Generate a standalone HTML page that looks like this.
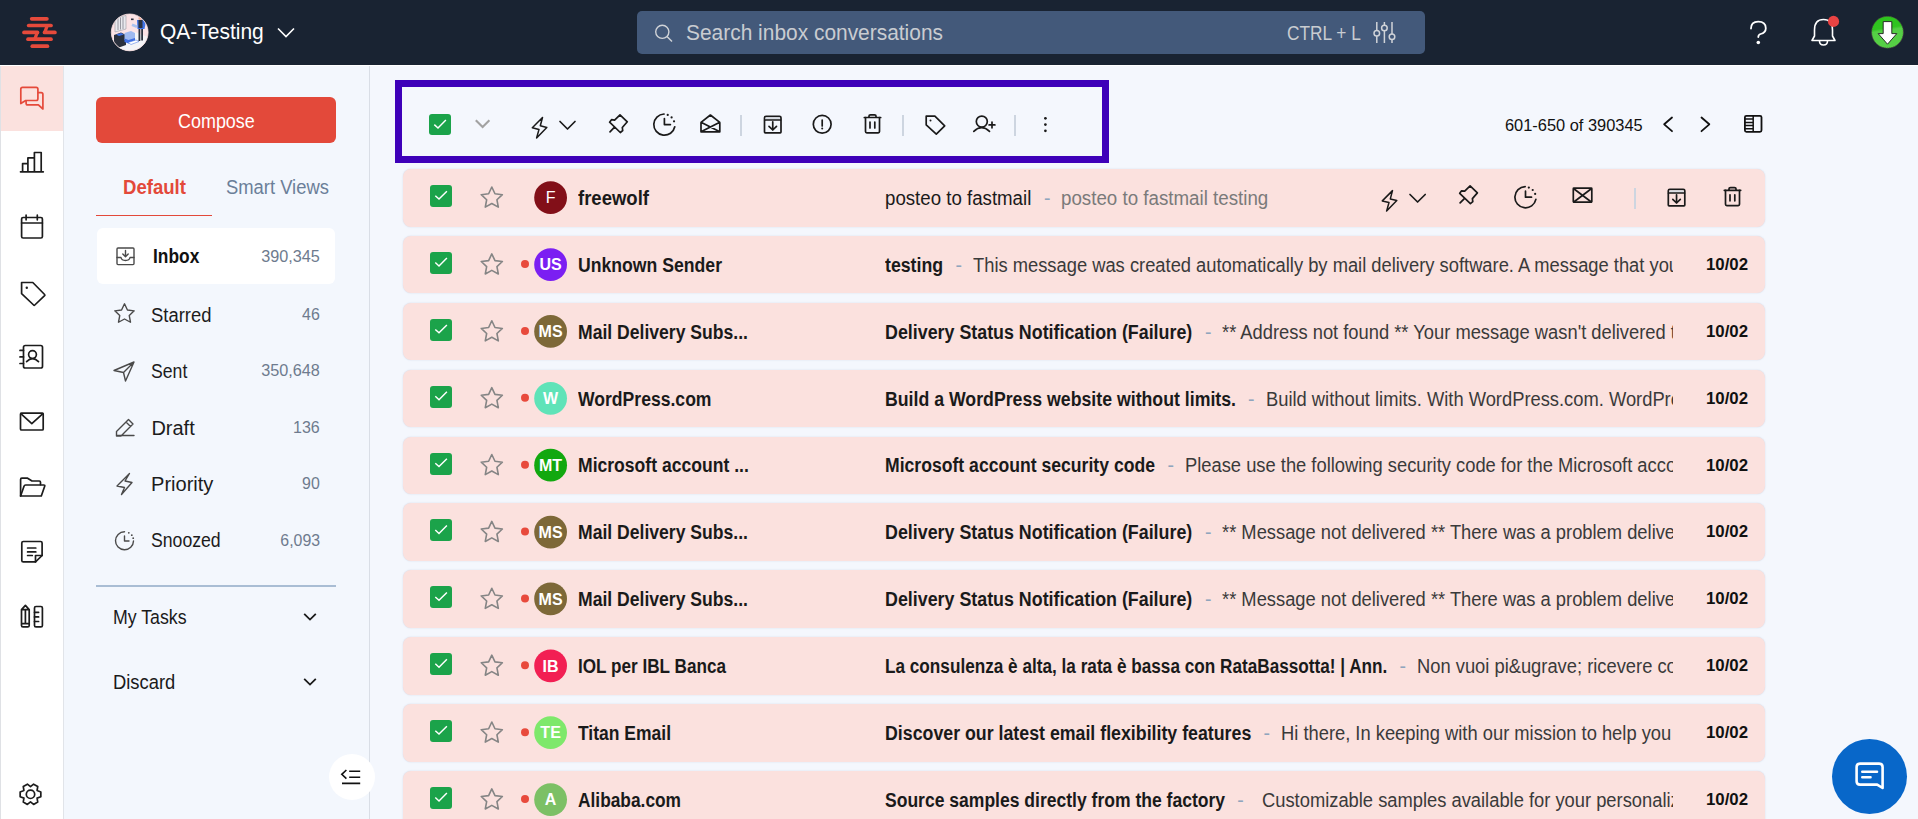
<!DOCTYPE html><html><head><meta charset="utf-8"><style>html,body{margin:0;padding:0;width:1918px;height:819px;overflow:hidden;background:#f4f7fd;font-family:"Liberation Sans", sans-serif}div{font-family:"Liberation Sans", sans-serif}</style></head><body><div style="position:absolute;left:0;top:0;width:1918px;height:65px;background:#192332;border-bottom:1px solid #fff;box-sizing:content-box"></div><div style="position:absolute;left:637px;top:11px;width:788px;height:43px;background:#43597a;border-radius:5px"></div><div style="position:absolute;left:0;top:66px;width:64px;height:753px;background:#ffffff;border-left:1px solid #dfe1e5;border-right:1px solid #e1e4e9;box-sizing:border-box"></div><div style="position:absolute;left:1px;top:66px;width:62px;height:65px;background:#fbe1de"></div><div style="position:absolute;left:64px;top:66px;width:306px;height:753px;background:#f3f7fd;border-right:1px solid #d9dee6;box-sizing:border-box"></div><div style="position:absolute;left:96px;top:97px;width:240px;height:46px;background:#e3493a;border-radius:6px"></div><div style="position:absolute;left:96px;top:214.5px;width:116px;height:1.5px;background:#e3493a"></div><div style="position:absolute;left:97px;top:228px;width:238px;height:56px;background:#ffffff;border-radius:6px"></div><div style="position:absolute;left:96px;top:584.5px;width:240px;height:2px;background:#a9bdd4"></div><div style="position:absolute;left:329px;top:754px;width:46px;height:46px;background:#ffffff;border-radius:50%"></div><div style="position:absolute;left:395px;top:79.5px;width:714px;height:83.5px;border:7.5px solid #3e00b9;box-sizing:border-box"></div><div style="position:absolute;left:429px;top:114px;width:22px;height:21px;background:#1ba34a;border-radius:3px"></div><div style="position:absolute;left:740.3px;top:115px;width:2px;height:20.5px;background:#cdd5e0"></div><div style="position:absolute;left:901.9px;top:115px;width:2px;height:20.5px;background:#cdd5e0"></div><div style="position:absolute;left:1013.9px;top:115px;width:2px;height:20.5px;background:#cdd5e0"></div><div style="position:absolute;left:403px;top:169.000px;width:1362px;height:57.5px;background:#fbe1de;border-radius:8px;box-shadow:0 0 1.5px rgba(150,170,200,0.45)"></div><div style="position:absolute;left:430px;top:185.1px;width:22px;height:22px;background:#1ba34a;border-radius:3px"></div><div style="position:absolute;left:403px;top:235.875px;width:1362px;height:57.5px;background:#fbe1de;border-radius:8px;box-shadow:0 0 1.5px rgba(150,170,200,0.45)"></div><div style="position:absolute;left:430px;top:251.98px;width:22px;height:22px;background:#1ba34a;border-radius:3px"></div><div style="position:absolute;left:403px;top:302.750px;width:1362px;height:57.5px;background:#fbe1de;border-radius:8px;box-shadow:0 0 1.5px rgba(150,170,200,0.45)"></div><div style="position:absolute;left:430px;top:318.85px;width:22px;height:22px;background:#1ba34a;border-radius:3px"></div><div style="position:absolute;left:403px;top:369.625px;width:1362px;height:57.5px;background:#fbe1de;border-radius:8px;box-shadow:0 0 1.5px rgba(150,170,200,0.45)"></div><div style="position:absolute;left:430px;top:385.73px;width:22px;height:22px;background:#1ba34a;border-radius:3px"></div><div style="position:absolute;left:403px;top:436.500px;width:1362px;height:57.5px;background:#fbe1de;border-radius:8px;box-shadow:0 0 1.5px rgba(150,170,200,0.45)"></div><div style="position:absolute;left:430px;top:452.6px;width:22px;height:22px;background:#1ba34a;border-radius:3px"></div><div style="position:absolute;left:403px;top:503.375px;width:1362px;height:57.5px;background:#fbe1de;border-radius:8px;box-shadow:0 0 1.5px rgba(150,170,200,0.45)"></div><div style="position:absolute;left:430px;top:519.48px;width:22px;height:22px;background:#1ba34a;border-radius:3px"></div><div style="position:absolute;left:403px;top:570.250px;width:1362px;height:57.5px;background:#fbe1de;border-radius:8px;box-shadow:0 0 1.5px rgba(150,170,200,0.45)"></div><div style="position:absolute;left:430px;top:586.35px;width:22px;height:22px;background:#1ba34a;border-radius:3px"></div><div style="position:absolute;left:403px;top:637.125px;width:1362px;height:57.5px;background:#fbe1de;border-radius:8px;box-shadow:0 0 1.5px rgba(150,170,200,0.45)"></div><div style="position:absolute;left:430px;top:653.23px;width:22px;height:22px;background:#1ba34a;border-radius:3px"></div><div style="position:absolute;left:403px;top:704.000px;width:1362px;height:57.5px;background:#fbe1de;border-radius:8px;box-shadow:0 0 1.5px rgba(150,170,200,0.45)"></div><div style="position:absolute;left:430px;top:720.1px;width:22px;height:22px;background:#1ba34a;border-radius:3px"></div><div style="position:absolute;left:403px;top:770.875px;width:1362px;height:57.5px;background:#fbe1de;border-radius:8px;box-shadow:0 0 1.5px rgba(150,170,200,0.45)"></div><div style="position:absolute;left:430px;top:786.98px;width:22px;height:22px;background:#1ba34a;border-radius:3px"></div><div style="position:absolute;left:1634px;top:188px;width:2px;height:20.5px;background:#cdd5e0"></div><div style="position:absolute;left:1832px;top:739px;width:75px;height:75px;background:#0867c9;border-radius:50%"></div><svg style="position:absolute;left:0;top:0" width="1918" height="819" viewBox="0 0 1918 819"><line x1="31.7" y1="18.8" x2="46.9" y2="18.8" stroke="#e64a3b" stroke-width="3.7" stroke-linecap="round"/><line x1="28.7" y1="25.5" x2="51" y2="25.5" stroke="#e64a3b" stroke-width="3.7" stroke-linecap="round"/><line x1="24" y1="32.4" x2="37.5" y2="32.4" stroke="#e64a3b" stroke-width="3.7" stroke-linecap="round"/><line x1="44.5" y1="32.4" x2="54.9" y2="32.4" stroke="#e64a3b" stroke-width="3.7" stroke-linecap="round"/><line x1="28" y1="39.2" x2="51" y2="39.2" stroke="#e64a3b" stroke-width="3.7" stroke-linecap="round"/><line x1="32.3" y1="46.2" x2="47.4" y2="46.2" stroke="#e64a3b" stroke-width="3.7" stroke-linecap="round"/><polygon points="45.5,25.5 49,25.5 46.5,32.4 43,32.4" fill="#e64a3b"/><polygon points="35.5,32.4 39,32.4 36.5,39.2 33,39.2" fill="#e64a3b"/><defs><clipPath id="avc"><circle cx="129.7" cy="32.4" r="18.4"/></clipPath></defs><g clip-path="url(#avc)"><rect x="110" y="13" width="40" height="40" fill="#fbe3e6"/><polygon points="110,40 135,32 150,38 150,53 110,53" fill="#f4f4f7"/><polygon points="115,18 126,15.5 126,29 115,32" fill="#e9e9ee" stroke="#9a9aa2" stroke-width="0.6"/><path d="M118 18 V30 M120.5 17.5 V29.5 M123 17 V29" stroke="#8d8d96" stroke-width="0.9"/><polygon points="114,35 121,32.5 126,35 126,45 119,47.5 114,45" fill="#2a303d"/><polygon points="116,34.5 121,33 124,34.5 119,36" fill="#3d6ee0"/><polygon points="124.5,33 131,31 135,33 135,40 128.5,42 124.5,40" fill="#9fb9f0"/><polygon points="124.5,38.5 128.5,40 135,38 135,41.5 128.5,43.5 124.5,42" fill="#3f6fe3"/><polygon points="128,42.5 136,40 139,41.5 131,44.5" fill="#ffffff" stroke="#3f6fe3" stroke-width="0.5"/><rect x="138.5" y="28" width="1.8" height="13" fill="#2c3340"/><rect x="141.2" y="28" width="1.8" height="12.5" fill="#2c3340"/><polygon points="137,20 144,19.5 145.5,24 144.5,29 137.5,29" fill="#3f73e6"/><rect x="138.5" y="20" width="4" height="8" fill="#2c3340"/><circle cx="140.3" cy="18.2" r="1.8" fill="#f0b09a"/><polygon points="132.5,23.5 137.5,25.5 136.5,28 131.5,26" fill="#a9c2f2"/><rect x="131" y="18.5" width="2.6" height="1.6" fill="#2c3340"/></g><circle cx="129.7" cy="32.4" r="18.4" fill="none" stroke="#f6dede" stroke-width="0.8"/><polyline points="278,28.5 286,36.5 294,28.5" fill="none" stroke="#fff" stroke-width="1.6"/><circle cx="662.3" cy="31.8" r="6.6" fill="none" stroke="#d0d3d8" stroke-width="1.4"/><line x1="667" y1="36.6" x2="672" y2="41.5" stroke="#d0d3d8" stroke-width="1.4"/><line x1="1376.8" y1="22" x2="1376.8" y2="43" stroke="#d0d3d8" stroke-width="1.5"/><circle cx="1376.8" cy="33.3" r="2.8" fill="#43597a" stroke="#d0d3d8" stroke-width="1.5"/><line x1="1384.4" y1="22" x2="1384.4" y2="43" stroke="#d0d3d8" stroke-width="1.5"/><circle cx="1384.4" cy="28.0" r="2.8" fill="#43597a" stroke="#d0d3d8" stroke-width="1.5"/><line x1="1392" y1="22" x2="1392" y2="43" stroke="#d0d3d8" stroke-width="1.5"/><circle cx="1392" cy="36.8" r="2.8" fill="#43597a" stroke="#d0d3d8" stroke-width="1.5"/><path d="M1751 28.6 Q1751 21.6 1758.2 21.6 Q1765.8 21.6 1765.8 28.2 Q1765.8 32.6 1760.6 34 Q1758.3 34.8 1758.3 37" fill="none" stroke="#fff" stroke-width="1.8" stroke-linecap="round"/><circle cx="1758.3" cy="42.5" r="1.8" fill="#fff"/><path d="M1812 40.5 L1814.5 36 V30 Q1814.5 19.5 1823.5 19.5 Q1832.5 19.5 1832.5 30 V36 L1835 40.5 Z" fill="none" stroke="#fff" stroke-width="1.6" stroke-linejoin="round"/><path d="M1819.5 41 Q1819.5 45 1823.5 45 Q1827.5 45 1827.5 41" fill="none" stroke="#fff" stroke-width="1.6"/><circle cx="1833.5" cy="21.4" r="5.6" fill="#e94343"/><defs><linearGradient id="gg" x1="0" y1="0" x2="0.15" y2="1"><stop offset="0" stop-color="#2cc51c"/><stop offset="0.42" stop-color="#30c420"/><stop offset="0.5" stop-color="#55cf45"/><stop offset="1" stop-color="#55cf45"/></linearGradient></defs><circle cx="1887.5" cy="32.25" r="15.9" fill="url(#gg)" stroke="#4a4040" stroke-width="0.9" stroke-dasharray="1.3 0.7"/><path d="M1883.2 21.6 H1891.8 V33.6 H1896.8 L1887.5 44.2 L1878.2 33.6 H1883.2 Z" fill="#fff" stroke="#1a1a1a" stroke-width="0.9"/><path d="M20.8 103.5 V89 Q20.8 87.3 22.5 87.3 H36.2 Q37.9 87.3 37.9 89 V98.8 Q37.9 100.5 36.2 100.5 H25.7 Z" fill="none" stroke="#e54a3b" stroke-width="1.7" stroke-linejoin="round"/><path d="M37.9 92.7 H41.2 Q42.9 92.7 42.9 94.4 V109 L38.4 104.9 H27.8 Q26.1 104.9 26.1 103.2 V100.5" fill="none" stroke="#e54a3b" stroke-width="1.7" stroke-linejoin="round"/><path d="M20.5 171.8 H43.3 M22.6 171.8 V163.6 H27.9 V171.8 M27.9 163.6 V157.9 H34.4 V171.8 M34.4 157.9 V152.5 H41.2 V171.8" fill="none" stroke="#1c1c1c" stroke-width="1.7" stroke-linejoin="round" stroke-linecap="round"/><rect x="21.6" y="217.5" width="20.8" height="20.5" rx="1.5" fill="none" stroke="#1c1c1c" stroke-width="1.7" stroke-linejoin="round" stroke-linecap="round"/><path d="M21.6 223 H42.4 M26.1 215.2 V219.8 M37.3 215.2 V219.8" fill="none" stroke="#1c1c1c" stroke-width="1.7" stroke-linejoin="round" stroke-linecap="round"/><path d="M21.6 282.5 H32.8 L44.6 294.5 Q45.2 295.1 44.6 295.7 L34.8 305 Q34.2 305.6 33.6 305 L21.6 293.7 Z" fill="none" stroke="#1c1c1c" stroke-width="1.7" stroke-linejoin="round" stroke-linecap="round"/><circle cx="26.8" cy="287.7" r="1.2" fill="#1c1c1c"/><rect x="23.5" y="345.5" width="19" height="22.5" rx="1.8" fill="none" stroke="#1c1c1c" stroke-width="1.7" stroke-linejoin="round" stroke-linecap="round"/><path d="M20 350.4 H23.5 M20 356.9 H23.5 M20 363.5 H23.5" fill="none" stroke="#1c1c1c" stroke-width="1.7" stroke-linejoin="round" stroke-linecap="round"/><circle cx="32.5" cy="354.6" r="3.9" fill="none" stroke="#1c1c1c" stroke-width="1.7" stroke-linejoin="round" stroke-linecap="round"/><path d="M26.6 361.6 Q32.5 355.8 38.5 361.6" fill="none" stroke="#1c1c1c" stroke-width="1.7" stroke-linejoin="round" stroke-linecap="round"/><rect x="20.5" y="413.2" width="22.7" height="16.8" rx="1" fill="none" stroke="#1c1c1c" stroke-width="1.7" stroke-linejoin="round" stroke-linecap="round"/><path d="M20.8 413.6 L31.8 423.6 L42.9 413.6" fill="none" stroke="#1c1c1c" stroke-width="1.7" stroke-linejoin="round" stroke-linecap="round"/><path d="M20.6 496 V479.4 Q20.6 478.2 21.8 478.2 H27.6 L32 481 H39.3 Q40.5 481 40.5 482.2 V484.6" fill="none" stroke="#1c1c1c" stroke-width="1.7" stroke-linejoin="round" stroke-linecap="round"/><path d="M20.6 496 L24 486.2 Q24.4 485 25.6 485 H43.8 Q45.1 485 44.7 486.2 L41.3 496 Z" fill="none" stroke="#1c1c1c" stroke-width="1.7" stroke-linejoin="round" stroke-linecap="round"/><path d="M21.8 543 Q21.8 541.5 23.3 541.5 H40.6 Q42.1 541.5 42.1 543 V555.5 L35.5 561.9 H23.3 Q21.8 561.9 21.8 560.4 Z" fill="none" stroke="#1c1c1c" stroke-width="1.7" stroke-linejoin="round" stroke-linecap="round"/><path d="M35.5 561.9 V555.5 H42.1 M27.6 548 H35.8 M27.6 551.9 H35.8 M27.6 555.5 H32.3" fill="none" stroke="#1c1c1c" stroke-width="1.7" stroke-linejoin="round" stroke-linecap="round"/><path d="M21.5 609.6 L25.4 605.4 L29.2 609.6 V625.4 Q29.2 626.9 27.7 626.9 H23 Q21.5 626.9 21.5 625.4 Z M21.5 609.6 H29.2 M25.4 609.6 V623.6 M21.5 623.6 H29.2" fill="none" stroke="#1c1c1c" stroke-width="1.7" stroke-linejoin="round" stroke-linecap="round"/><rect x="34.5" y="606.5" width="7.9" height="20.4" rx="1.5" fill="none" stroke="#1c1c1c" stroke-width="1.7" stroke-linejoin="round" stroke-linecap="round"/><path d="M34.5 612.3 H38.6 M34.5 616.9 H38.6 M34.5 621.5 H38.6" fill="none" stroke="#1c1c1c" stroke-width="1.7" stroke-linejoin="round" stroke-linecap="round"/><path d="M37.08 790.50 L40.83 791.92 L40.83 796.68 L37.08 798.10 L37.73 802.05 L33.60 804.44 L30.50 801.90 L27.40 804.44 L23.27 802.05 L23.92 798.10 L20.17 796.68 L20.17 791.92 L23.92 790.50 L23.27 786.55 L27.40 784.16 L30.50 786.70 L33.60 784.16 L37.73 786.55 Z" fill="none" stroke="#1c1c1c" stroke-width="1.7" stroke-linejoin="round" stroke-linecap="round"/><circle cx="30.5" cy="794.3" r="4.2" fill="none" stroke="#1c1c1c" stroke-width="1.7" stroke-linejoin="round" stroke-linecap="round"/><rect x="117" y="248" width="17" height="16.6" rx="1" fill="none" stroke="#4a4a4a" stroke-width="1.4" stroke-linejoin="round" stroke-linecap="round"/><path d="M117 257.5 H121 Q121.5 260.5 125.5 260.5 Q129.5 260.5 130 257.5 H134 M125.5 250.5 V256.5 M122.8 254 L125.5 256.7 L128.2 254" fill="none" stroke="#4a4a4a" stroke-width="1.4" stroke-linejoin="round" stroke-linecap="round"/><polygon points="124.50,303.80 127.44,309.95 134.20,310.85 129.26,315.55 130.50,322.25 124.50,319.00 118.50,322.25 119.74,315.55 114.80,310.85 121.56,309.95" fill="none" stroke="#4a4a4a" stroke-width="1.4" stroke-linejoin="round" stroke-linecap="round"/><path d="M114 370.5 L134 362 L125.5 381 L123.5 372.5 Z M123.5 372.5 L134 362" fill="none" stroke="#4a4a4a" stroke-width="1.4" stroke-linejoin="round" stroke-linecap="round"/><path d="M116.5 435.5 V431.5 L128.5 419.5 L133 424 L121 436 H116.5 Z M116.5 435.5 H134 M126 422 L130.5 426.5" fill="none" stroke="#4a4a4a" stroke-width="1.4" stroke-linejoin="round" stroke-linecap="round"/><path d="M129.5 473.5 L117 486 L124.5 487.5 L121.5 494.5 L132 482.5 L125 481 Z" fill="none" stroke="#4a4a4a" stroke-width="1.4" stroke-linejoin="round" stroke-linecap="round"/><path d="M124.5 531.8 A9 9 0 1 0 133.5 541" fill="none" stroke="#4a4a4a" stroke-width="1.4" stroke-linejoin="round" stroke-linecap="round"/><path d="M124.5 536 V541 H129" fill="none" stroke="#4a4a4a" stroke-width="1.4" stroke-linejoin="round" stroke-linecap="round"/><circle cx="128.8" cy="532.8" r="0.9" fill="#4a4a4a"/><circle cx="131.8" cy="535.2" r="0.9" fill="#4a4a4a"/><circle cx="133.2" cy="538.2" r="0.9" fill="#4a4a4a"/><polyline points="304.2,613.8 310,619.6 315.8,613.8" fill="none" stroke="#1a1a1a" stroke-width="1.8"/><polyline points="304.2,678.8 310,684.6 315.8,678.8" fill="none" stroke="#1a1a1a" stroke-width="1.8"/><path d="M346.4 770 L341.8 774.3 L346.4 778.6 M349.2 771.3 H360.2 M349.2 777.3 H360.2 M342 783.4 H360.2" fill="none" stroke="#111" stroke-width="1.6"/><polyline points="434.3,124.6 438,128 445.9,120.1" fill="none" stroke="#fff" stroke-width="1.45"/><polyline points="475.8,120.2 482.6,127 489.4,120.2" fill="none" stroke="#a2a2a2" stroke-width="2.1"/><path d="M542.50 117.50 L532.30 127.80 L539.00 129.40 L536.60 138.00 L546.80 127.40 L540.30 125.80 Z" fill="none" stroke="#1a1a1a" stroke-width="1.5" stroke-linejoin="round"/><polyline points="560,121.5 567.5,129 575,121.5" fill="none" stroke="#1a1a1a" stroke-width="1.7" stroke-linejoin="round" stroke-linecap="round"/><path d="M620 114.8 L627.3 121.8 L622.3 127.5 L622.7 130.5 L620.3 132.5 L609.6 122.2 L611.5 119.7 L614.6 120.1 Z M614.5 127.2 L610 131.8" fill="none" stroke="#1a1a1a" stroke-width="1.7" stroke-linejoin="round" stroke-linecap="round"/><path d="M664.03 114.01 A10.6 10.6 0 1 0 674.77 126.80" fill="none" stroke="#1a1a1a" stroke-width="1.7" stroke-linejoin="round" stroke-linecap="round"/><path d="M664.4 118.6 V124.6 H670.4" fill="none" stroke="#1a1a1a" stroke-width="1.7" stroke-linejoin="round" stroke-linecap="round"/><circle cx="667.72" cy="114.96" r="1.1" fill="#1a1a1a"/><circle cx="671.61" cy="117.39" r="1.1" fill="#1a1a1a"/><circle cx="674.04" cy="121.28" r="1.1" fill="#1a1a1a"/><path d="M701 122.3 L710.4 115 L719.8 122.3 V131.8 H701 Z M701 122.3 L719.8 131.8 M719.8 122.3 L701 131.8" fill="none" stroke="#1a1a1a" stroke-width="1.7" stroke-linejoin="round" stroke-linecap="round"/><path d="M764.5 120 V117.8 Q764.5 116.3 766 116.3 H779.5 Q781 116.3 781 117.8 V120" fill="none" stroke="#1a1a1a" stroke-width="1.7" stroke-linejoin="round" stroke-linecap="round"/><rect x="765.7" y="117.3" width="14.1" height="2.6" fill="#d9dde4"/><rect x="764.5" y="120" width="16.5" height="12.8" rx="0.8" fill="none" stroke="#1a1a1a" stroke-width="1.7" stroke-linejoin="round" stroke-linecap="round"/><path d="M772.75 121.8 V130 M769 126.3 L772.75 130 L776.5 126.3" fill="none" stroke="#1a1a1a" stroke-width="1.7" stroke-linejoin="round" stroke-linecap="round"/><circle cx="822.2" cy="124.3" r="8.9" fill="none" stroke="#1a1a1a" stroke-width="1.7" stroke-linejoin="round" stroke-linecap="round"/><path d="M822.2 120 V126" fill="none" stroke="#1a1a1a" stroke-width="1.7" stroke-linejoin="round" stroke-linecap="round"/><circle cx="822.2" cy="128.6" r="1" fill="#1a1a1a"/><path d="M864.3 117.5 H880.7 M869 117.5 V116.0 Q869 114.8 870.5 114.8 H874.5 Q876 114.8 876 116.0 V117.5" fill="none" stroke="#1a1a1a" stroke-width="1.7" stroke-linejoin="round" stroke-linecap="round"/><path d="M865.5 117.5 V131.5 Q865.5 132.8 866.8 132.8 H878.2 Q879.5 132.8 879.5 131.5 V117.5" fill="none" stroke="#1a1a1a" stroke-width="1.7" stroke-linejoin="round" stroke-linecap="round"/><path d="M870 122.0 V128.0 M874.8 122.0 V128.0" fill="none" stroke="#1a1a1a" stroke-width="1.7" stroke-linejoin="round" stroke-linecap="round"/><path d="M926.2 116.2 H934.9 L944.7 125.8 L936.3 134.2 L926.2 124.9 Z" fill="none" stroke="#1a1a1a" stroke-width="1.7" stroke-linejoin="round" stroke-linecap="round"/><circle cx="930.5" cy="120.5" r="1" fill="#1a1a1a"/><circle cx="981.8" cy="121.6" r="5.5" fill="none" stroke="#1a1a1a" stroke-width="1.7" stroke-linejoin="round" stroke-linecap="round"/><path d="M973.8 131.4 Q981.6 124 989.5 131.4 M992 122 V127.8 M989.1 124.9 H994.9" fill="none" stroke="#1a1a1a" stroke-width="1.7" stroke-linejoin="round" stroke-linecap="round"/><circle cx="1045.4" cy="118.3" r="1.35" fill="#1a1a1a"/><circle cx="1045.4" cy="124.6" r="1.35" fill="#1a1a1a"/><circle cx="1045.4" cy="130.8" r="1.35" fill="#1a1a1a"/><polyline points="1672,117.5 1664.2,124.3 1672,131.2" fill="none" stroke="#111" stroke-width="1.8" stroke-linecap="round" stroke-linejoin="round"/><polyline points="1701.5,117.5 1709.3,124.3 1701.5,131.2" fill="none" stroke="#111" stroke-width="1.8" stroke-linecap="round" stroke-linejoin="round"/><rect x="1744.9" y="115.8" width="16.6" height="16" rx="1.5" fill="none" stroke="#111" stroke-width="1.8"/><path d="M1753.2 115.8 V131.8 M1745 119.1 H1753.2 M1745 122.4 H1753.2 M1745 125.6 H1753.2 M1745 128.8 H1753.2" fill="none" stroke="#111" stroke-width="1.5"/><polyline points="435.3,195.7 439,199.1 446.9,191.2" fill="none" stroke="#fff" stroke-width="1.45"/><polygon points="491.80,187.00 494.97,193.73 502.36,194.67 496.94,199.77 498.32,207.08 491.80,203.50 485.28,207.08 486.66,199.77 481.24,194.67 488.63,193.73" fill="none" stroke="#858585" stroke-width="1.6" stroke-linejoin="round"/><circle cx="550.6" cy="197.70" r="16.4" fill="#820f18"/><polyline points="435.3,262.58 439,265.98 446.9,258.08" fill="none" stroke="#fff" stroke-width="1.45"/><polygon points="491.80,253.88 494.97,260.61 502.36,261.54 496.94,266.64 498.32,273.96 491.80,270.38 485.28,273.96 486.66,266.64 481.24,261.54 488.63,260.61" fill="none" stroke="#858585" stroke-width="1.6" stroke-linejoin="round"/><circle cx="525" cy="264.08" r="4" fill="#e84a3c"/><circle cx="550.6" cy="264.58" r="16.4" fill="#7b1ff2"/><polyline points="435.3,329.45000000000005 439,332.85 446.9,324.95000000000005" fill="none" stroke="#fff" stroke-width="1.45"/><polygon points="491.80,320.75 494.97,327.48 502.36,328.42 496.94,333.52 498.32,340.83 491.80,337.25 485.28,340.83 486.66,333.52 481.24,328.42 488.63,327.48" fill="none" stroke="#858585" stroke-width="1.6" stroke-linejoin="round"/><circle cx="525" cy="330.95" r="4" fill="#e84a3c"/><circle cx="550.6" cy="331.45" r="16.4" fill="#7d6838"/><polyline points="435.3,396.33000000000004 439,399.73 446.9,391.83000000000004" fill="none" stroke="#fff" stroke-width="1.45"/><polygon points="491.80,387.62 494.97,394.36 502.36,395.29 496.94,400.39 498.32,407.71 491.80,404.12 485.28,407.71 486.66,400.39 481.24,395.29 488.63,394.36" fill="none" stroke="#858585" stroke-width="1.6" stroke-linejoin="round"/><circle cx="525" cy="397.83" r="4" fill="#e84a3c"/><circle cx="550.6" cy="398.33" r="16.4" fill="#5fe3b8"/><polyline points="435.3,463.20000000000005 439,466.6 446.9,458.70000000000005" fill="none" stroke="#fff" stroke-width="1.45"/><polygon points="491.80,454.50 494.97,461.23 502.36,462.17 496.94,467.27 498.32,474.58 491.80,471.00 485.28,474.58 486.66,467.27 481.24,462.17 488.63,461.23" fill="none" stroke="#858585" stroke-width="1.6" stroke-linejoin="round"/><circle cx="525" cy="464.70" r="4" fill="#e84a3c"/><circle cx="550.6" cy="465.20" r="16.4" fill="#12a80f"/><polyline points="435.3,530.08 439,533.48 446.9,525.58" fill="none" stroke="#fff" stroke-width="1.45"/><polygon points="491.80,521.38 494.97,528.11 502.36,529.04 496.94,534.14 498.32,541.46 491.80,537.88 485.28,541.46 486.66,534.14 481.24,529.04 488.63,528.11" fill="none" stroke="#858585" stroke-width="1.6" stroke-linejoin="round"/><circle cx="525" cy="531.58" r="4" fill="#e84a3c"/><circle cx="550.6" cy="532.08" r="16.4" fill="#7d6838"/><polyline points="435.3,596.95 439,600.35 446.9,592.45" fill="none" stroke="#fff" stroke-width="1.45"/><polygon points="491.80,588.25 494.97,594.98 502.36,595.92 496.94,601.02 498.32,608.33 491.80,604.75 485.28,608.33 486.66,601.02 481.24,595.92 488.63,594.98" fill="none" stroke="#858585" stroke-width="1.6" stroke-linejoin="round"/><circle cx="525" cy="598.45" r="4" fill="#e84a3c"/><circle cx="550.6" cy="598.95" r="16.4" fill="#7d6838"/><polyline points="435.3,663.83 439,667.23 446.9,659.33" fill="none" stroke="#fff" stroke-width="1.45"/><polygon points="491.80,655.12 494.97,661.86 502.36,662.79 496.94,667.89 498.32,675.21 491.80,671.62 485.28,675.21 486.66,667.89 481.24,662.79 488.63,661.86" fill="none" stroke="#858585" stroke-width="1.6" stroke-linejoin="round"/><circle cx="525" cy="665.33" r="4" fill="#e84a3c"/><circle cx="550.6" cy="665.83" r="16.4" fill="#f21f53"/><polyline points="435.3,730.7 439,734.1 446.9,726.2" fill="none" stroke="#fff" stroke-width="1.45"/><polygon points="491.80,722.00 494.97,728.73 502.36,729.67 496.94,734.77 498.32,742.08 491.80,738.50 485.28,742.08 486.66,734.77 481.24,729.67 488.63,728.73" fill="none" stroke="#858585" stroke-width="1.6" stroke-linejoin="round"/><circle cx="525" cy="732.20" r="4" fill="#e84a3c"/><circle cx="550.6" cy="732.70" r="16.4" fill="#7ee86b"/><polyline points="435.3,797.58 439,800.98 446.9,793.08" fill="none" stroke="#fff" stroke-width="1.45"/><polygon points="491.80,788.88 494.97,795.61 502.36,796.54 496.94,801.64 498.32,808.96 491.80,805.38 485.28,808.96 486.66,801.64 481.24,796.54 488.63,795.61" fill="none" stroke="#858585" stroke-width="1.6" stroke-linejoin="round"/><circle cx="525" cy="799.08" r="4" fill="#e84a3c"/><circle cx="550.6" cy="799.58" r="16.4" fill="#7cc065"/><path d="M1392.50 190.60 L1382.30 200.90 L1389.00 202.50 L1386.60 211.10 L1396.80 200.50 L1390.30 198.90 Z" fill="none" stroke="#1a1a1a" stroke-width="1.5" stroke-linejoin="round"/><polyline points="1410,194.5 1417.6,202 1425.2,194.5" fill="none" stroke="#1a1a1a" stroke-width="1.7" stroke-linejoin="round" stroke-linecap="round"/><path d="M1470.1 185.9 L1477.3999999999999 192.9 L1472.3999999999999 198.6 L1472.8 201.6 L1470.3999999999999 203.6 L1459.6999999999998 193.29999999999998 L1461.6 190.79999999999998 L1464.6999999999998 191.2 Z M1464.6 198.29999999999998 L1460.1 202.9" fill="none" stroke="#1a1a1a" stroke-width="1.7" stroke-linejoin="round" stroke-linecap="round"/><path d="M1525.13 186.61 A10.6 10.6 0 1 0 1535.87 199.40" fill="none" stroke="#1a1a1a" stroke-width="1.7" stroke-linejoin="round" stroke-linecap="round"/><path d="M1525.5 191.2 V197.2 H1531.5" fill="none" stroke="#1a1a1a" stroke-width="1.7" stroke-linejoin="round" stroke-linecap="round"/><circle cx="1528.82" cy="187.56" r="1.1" fill="#1a1a1a"/><circle cx="1532.71" cy="189.99" r="1.1" fill="#1a1a1a"/><circle cx="1535.14" cy="193.88" r="1.1" fill="#1a1a1a"/><rect x="1573.3" y="188.2" width="18.5" height="14" rx="0.6" fill="none" stroke="#1a1a1a" stroke-width="1.7" stroke-linejoin="round" stroke-linecap="round"/><path d="M1573.8 188.8 L1591.3 202 M1591.3 188.8 L1573.8 202" fill="none" stroke="#1a1a1a" stroke-width="1.7" stroke-linejoin="round" stroke-linecap="round"/><path d="M1668.3 193 V190.8 Q1668.3 189.3 1669.8 189.3 H1683.3 Q1684.8 189.3 1684.8 190.8 V193" fill="none" stroke="#1a1a1a" stroke-width="1.7" stroke-linejoin="round" stroke-linecap="round"/><rect x="1669.5" y="190.3" width="14.1" height="2.6" fill="#d9dde4"/><rect x="1668.3" y="193" width="16.5" height="12.8" rx="0.8" fill="none" stroke="#1a1a1a" stroke-width="1.7" stroke-linejoin="round" stroke-linecap="round"/><path d="M1676.55 194.8 V203 M1672.8 199.3 L1676.55 203 L1680.3 199.3" fill="none" stroke="#1a1a1a" stroke-width="1.7" stroke-linejoin="round" stroke-linecap="round"/><path d="M1724.3 190.3 H1740.7 M1729 190.3 V188.8 Q1729 187.60000000000002 1730.5 187.60000000000002 H1734.5 Q1736 187.60000000000002 1736 188.8 V190.3" fill="none" stroke="#1a1a1a" stroke-width="1.7" stroke-linejoin="round" stroke-linecap="round"/><path d="M1725.5 190.3 V204.3 Q1725.5 205.60000000000002 1726.8 205.60000000000002 H1738.2 Q1739.5 205.60000000000002 1739.5 204.3 V190.3" fill="none" stroke="#1a1a1a" stroke-width="1.7" stroke-linejoin="round" stroke-linecap="round"/><path d="M1730 194.8 V200.8 M1734.8 194.8 V200.8" fill="none" stroke="#1a1a1a" stroke-width="1.7" stroke-linejoin="round" stroke-linecap="round"/><path d="M1856.6 767 Q1856.6 763.6 1860 763.6 H1879.2 Q1882.6 763.6 1882.6 767 V788 L1877.2 784.6 H1860 Q1856.6 784.6 1856.6 781.2 Z" fill="none" stroke="#fff" stroke-width="2.6" stroke-linejoin="round"/><path d="M1862.3 771.8 H1877 M1862.3 777.3 H1870.5" fill="none" stroke="#fff" stroke-width="2.6" stroke-linecap="round"/></svg><div id="t0" style="position:absolute;top:21.45px;font-size:22.5px;line-height:22.5px;font-weight:400;color:#ffffff;white-space:nowrap;transform:scaleX(0.9326);transform-origin:left 0;left:160.00px;">QA-Testing</div><div id="t1" style="position:absolute;top:21.88px;font-size:22px;line-height:22px;font-weight:400;color:#c9ccd1;white-space:nowrap;transform:scaleX(0.9509);transform-origin:left 0;left:686.00px;">Search inbox conversations</div><div id="t2" style="position:absolute;top:23.99px;font-size:19.5px;line-height:19.5px;font-weight:400;color:#c9ccd1;white-space:nowrap;transform:scaleX(0.8863);transform-origin:left 0;left:1286.80px;">CTRL + L</div><div id="t3" style="position:absolute;top:110.57px;font-size:20px;line-height:20px;font-weight:400;color:#ffffff;white-space:nowrap;transform:scaleX(0.8971);transform-origin:left 0;left:178.20px;">Compose</div><div id="t4" style="position:absolute;top:177.07px;font-size:20px;line-height:20px;font-weight:700;color:#e3493a;white-space:nowrap;transform:scaleX(0.9278);transform-origin:left 0;left:122.50px;">Default</div><div id="t5" style="position:absolute;top:177.07px;font-size:20px;line-height:20px;font-weight:400;color:#6b7f99;white-space:nowrap;transform:scaleX(0.9196);transform-origin:left 0;left:225.80px;">Smart Views</div><div id="t6" style="position:absolute;top:246.32px;font-size:20.3px;line-height:20.3px;font-weight:700;color:#111111;white-space:nowrap;transform:scaleX(0.8559);transform-origin:left 0;left:152.70px;">Inbox</div><div id="t7" style="position:absolute;top:248.76px;font-size:16px;line-height:16px;font-weight:400;color:#6e7b8e;white-space:nowrap;transform:scaleX(1.0131);transform-origin:right 0;right:1598.30px;">390,345</div><div id="t8" style="position:absolute;top:304.57px;font-size:20px;line-height:20px;font-weight:400;color:#1c1c1c;white-space:nowrap;transform:scaleX(0.9208);transform-origin:left 0;left:151.40px;">Starred</div><div id="t9" style="position:absolute;top:306.96px;font-size:16px;line-height:16px;font-weight:400;color:#6e7b8e;white-space:nowrap;transform:scaleX(0.9946);transform-origin:right 0;right:1598.30px;">46</div><div id="t10" style="position:absolute;top:360.57px;font-size:20px;line-height:20px;font-weight:400;color:#1c1c1c;white-space:nowrap;transform:scaleX(0.8820);transform-origin:left 0;left:151.40px;">Sent</div><div id="t11" style="position:absolute;top:362.96px;font-size:16px;line-height:16px;font-weight:400;color:#6e7b8e;white-space:nowrap;transform:scaleX(1.0148);transform-origin:right 0;right:1598.30px;">350,648</div><div id="t12" style="position:absolute;top:417.57px;font-size:20px;line-height:20px;font-weight:400;color:#1c1c1c;white-space:nowrap;left:151.40px;">Draft</div><div id="t13" style="position:absolute;top:419.96px;font-size:16px;line-height:16px;font-weight:400;color:#6e7b8e;white-space:nowrap;right:1598.30px;">136</div><div id="t14" style="position:absolute;top:474.07px;font-size:20px;line-height:20px;font-weight:400;color:#1c1c1c;white-space:nowrap;transform:scaleX(1.0027);transform-origin:left 0;left:151.40px;">Priority</div><div id="t15" style="position:absolute;top:476.46px;font-size:16px;line-height:16px;font-weight:400;color:#6e7b8e;white-space:nowrap;transform:scaleX(0.9946);transform-origin:right 0;right:1598.30px;">90</div><div id="t16" style="position:absolute;top:530.17px;font-size:20px;line-height:20px;font-weight:400;color:#1c1c1c;white-space:nowrap;transform:scaleX(0.8826);transform-origin:left 0;left:151.40px;">Snoozed</div><div id="t17" style="position:absolute;top:532.56px;font-size:16px;line-height:16px;font-weight:400;color:#6e7b8e;white-space:nowrap;transform:scaleX(0.9913);transform-origin:right 0;right:1598.30px;">6,093</div><div id="t18" style="position:absolute;top:607.15px;font-size:20.5px;line-height:20.5px;font-weight:400;color:#1a1a1a;white-space:nowrap;transform:scaleX(0.8652);transform-origin:left 0;left:112.50px;">My Tasks</div><div id="t19" style="position:absolute;top:672.15px;font-size:20.5px;line-height:20.5px;font-weight:400;color:#1a1a1a;white-space:nowrap;transform:scaleX(0.8964);transform-origin:left 0;left:112.50px;">Discard</div><div id="t20" style="position:absolute;top:117.23px;font-size:16.5px;line-height:16.5px;font-weight:400;color:#111111;white-space:nowrap;transform:scaleX(0.9939);transform-origin:left 0;left:1504.50px;">601-650 of 390345</div><div id="t21" style="position:absolute;top:190.46px;font-size:16px;line-height:16px;font-weight:400;color:#ffffff;white-space:nowrap;left:350.60px;width:400px;text-align:center;">F</div><div id="t22" style="position:absolute;top:188.89px;font-size:19.5px;line-height:19.5px;font-weight:700;color:#1a1a1a;white-space:nowrap;transform:scaleX(0.9496);transform-origin:left 0;left:578.00px;">freewolf</div><div id="t23" style="position:absolute;top:188.89px;font-size:19.5px;line-height:19.5px;font-weight:400;color:#1a1a1a;white-space:nowrap;transform:scaleX(0.9572);transform-origin:left 0;left:885.30px;">posteo to fastmail</div><div id="t24" style="position:absolute;top:188.89px;font-size:19.5px;line-height:19.5px;font-weight:400;color:#8fa5bd;white-space:nowrap;left:1044.00px;">-</div><div id="t25" style="position:absolute;top:188.89px;font-size:19.5px;line-height:19.5px;font-weight:400;color:#7a7a7a;white-space:nowrap;transform:scaleX(0.9610);transform-origin:left 0;left:1061.20px;">posteo to fastmail testing</div><div id="t26" style="position:absolute;top:257.33px;font-size:16px;line-height:16px;font-weight:700;color:#ffffff;white-space:nowrap;left:350.60px;width:400px;text-align:center;">US</div><div id="t27" style="position:absolute;top:255.77px;font-size:19.5px;line-height:19.5px;font-weight:700;color:#1a1a1a;white-space:nowrap;transform:scaleX(0.9041);transform-origin:left 0;left:578.00px;">Unknown Sender</div><div id="t28" style="position:absolute;top:255.77px;font-size:19.5px;line-height:19.5px;font-weight:700;color:#1a1a1a;white-space:nowrap;transform:scaleX(0.9089);transform-origin:left 0;left:885.30px;">testing</div><div id="t29" style="position:absolute;top:255.77px;font-size:19.5px;line-height:19.5px;font-weight:400;color:#8fa5bd;white-space:nowrap;left:955.40px;">-</div><div style="position:absolute;left:973.00px;top:255.77px;width:700.00px;height:25.4px;overflow:hidden"><div id="t30" style="font-size:19.5px;line-height:19.5px;font-weight:400;color:#3a3a3a;white-space:nowrap;transform:scaleX(0.9400);transform-origin:left 0;">This message was created automatically by mail delivery software. A message that you sent could not be delivered</div></div><div id="t31" style="position:absolute;top:256.93px;font-size:16px;line-height:16px;font-weight:700;color:#111111;white-space:nowrap;transform:scaleX(1.0488);transform-origin:left 0;left:1706.00px;">10/02</div><div id="t32" style="position:absolute;top:324.21px;font-size:16px;line-height:16px;font-weight:700;color:#ffffff;white-space:nowrap;left:350.60px;width:400px;text-align:center;">MS</div><div id="t33" style="position:absolute;top:322.64px;font-size:19.5px;line-height:19.5px;font-weight:700;color:#1a1a1a;white-space:nowrap;transform:scaleX(0.9015);transform-origin:left 0;left:578.00px;">Mail Delivery Subs...</div><div id="t34" style="position:absolute;top:322.64px;font-size:19.5px;line-height:19.5px;font-weight:700;color:#1a1a1a;white-space:nowrap;transform:scaleX(0.9148);transform-origin:left 0;left:885.30px;">Delivery Status Notification (Failure)</div><div id="t35" style="position:absolute;top:322.64px;font-size:19.5px;line-height:19.5px;font-weight:400;color:#8fa5bd;white-space:nowrap;left:1205.00px;">-</div><div style="position:absolute;left:1222.40px;top:322.64px;width:450.60px;height:25.4px;overflow:hidden"><div id="t36" style="font-size:19.5px;line-height:19.5px;font-weight:400;color:#3a3a3a;white-space:nowrap;transform:scaleX(0.9400);transform-origin:left 0;">** Address not found ** Your message wasn&#x27;t delivered to the address</div></div><div id="t37" style="position:absolute;top:323.81px;font-size:16px;line-height:16px;font-weight:700;color:#111111;white-space:nowrap;transform:scaleX(1.0488);transform-origin:left 0;left:1706.00px;">10/02</div><div id="t38" style="position:absolute;top:391.08px;font-size:16px;line-height:16px;font-weight:700;color:#ffffff;white-space:nowrap;left:350.60px;width:400px;text-align:center;">W</div><div id="t39" style="position:absolute;top:389.52px;font-size:19.5px;line-height:19.5px;font-weight:700;color:#1a1a1a;white-space:nowrap;transform:scaleX(0.9014);transform-origin:left 0;left:578.00px;">WordPress.com</div><div id="t40" style="position:absolute;top:389.52px;font-size:19.5px;line-height:19.5px;font-weight:700;color:#1a1a1a;white-space:nowrap;transform:scaleX(0.9083);transform-origin:left 0;left:885.30px;">Build a WordPress website without limits.</div><div id="t41" style="position:absolute;top:389.52px;font-size:19.5px;line-height:19.5px;font-weight:400;color:#8fa5bd;white-space:nowrap;left:1248.00px;">-</div><div style="position:absolute;left:1265.80px;top:389.52px;width:407.20px;height:25.4px;overflow:hidden"><div id="t42" style="font-size:19.5px;line-height:19.5px;font-weight:400;color:#3a3a3a;white-space:nowrap;transform:scaleX(0.9400);transform-origin:left 0;">Build without limits. With WordPress.com. WordPress</div></div><div id="t43" style="position:absolute;top:390.68px;font-size:16px;line-height:16px;font-weight:700;color:#111111;white-space:nowrap;transform:scaleX(1.0488);transform-origin:left 0;left:1706.00px;">10/02</div><div id="t44" style="position:absolute;top:457.96px;font-size:16px;line-height:16px;font-weight:700;color:#ffffff;white-space:nowrap;left:350.60px;width:400px;text-align:center;">MT</div><div id="t45" style="position:absolute;top:456.39px;font-size:19.5px;line-height:19.5px;font-weight:700;color:#1a1a1a;white-space:nowrap;transform:scaleX(0.9008);transform-origin:left 0;left:578.00px;">Microsoft account ...</div><div id="t46" style="position:absolute;top:456.39px;font-size:19.5px;line-height:19.5px;font-weight:700;color:#1a1a1a;white-space:nowrap;transform:scaleX(0.9028);transform-origin:left 0;left:885.30px;">Microsoft account security code</div><div id="t47" style="position:absolute;top:456.39px;font-size:19.5px;line-height:19.5px;font-weight:400;color:#8fa5bd;white-space:nowrap;left:1167.40px;">-</div><div style="position:absolute;left:1185.00px;top:456.39px;width:488.00px;height:25.4px;overflow:hidden"><div id="t48" style="font-size:19.5px;line-height:19.5px;font-weight:400;color:#3a3a3a;white-space:nowrap;transform:scaleX(0.9400);transform-origin:left 0;">Please use the following security code for the Microsoft account</div></div><div id="t49" style="position:absolute;top:457.56px;font-size:16px;line-height:16px;font-weight:700;color:#111111;white-space:nowrap;transform:scaleX(1.0488);transform-origin:left 0;left:1706.00px;">10/02</div><div id="t50" style="position:absolute;top:524.83px;font-size:16px;line-height:16px;font-weight:700;color:#ffffff;white-space:nowrap;left:350.60px;width:400px;text-align:center;">MS</div><div id="t51" style="position:absolute;top:523.27px;font-size:19.5px;line-height:19.5px;font-weight:700;color:#1a1a1a;white-space:nowrap;transform:scaleX(0.9015);transform-origin:left 0;left:578.00px;">Mail Delivery Subs...</div><div id="t52" style="position:absolute;top:523.27px;font-size:19.5px;line-height:19.5px;font-weight:700;color:#1a1a1a;white-space:nowrap;transform:scaleX(0.9148);transform-origin:left 0;left:885.30px;">Delivery Status Notification (Failure)</div><div id="t53" style="position:absolute;top:523.27px;font-size:19.5px;line-height:19.5px;font-weight:400;color:#8fa5bd;white-space:nowrap;left:1205.00px;">-</div><div style="position:absolute;left:1222.40px;top:523.27px;width:450.60px;height:25.4px;overflow:hidden"><div id="t54" style="font-size:19.5px;line-height:19.5px;font-weight:400;color:#3a3a3a;white-space:nowrap;transform:scaleX(0.9400);transform-origin:left 0;">** Message not delivered ** There was a problem delivering your message</div></div><div id="t55" style="position:absolute;top:524.43px;font-size:16px;line-height:16px;font-weight:700;color:#111111;white-space:nowrap;transform:scaleX(1.0488);transform-origin:left 0;left:1706.00px;">10/02</div><div id="t56" style="position:absolute;top:591.71px;font-size:16px;line-height:16px;font-weight:700;color:#ffffff;white-space:nowrap;left:350.60px;width:400px;text-align:center;">MS</div><div id="t57" style="position:absolute;top:590.14px;font-size:19.5px;line-height:19.5px;font-weight:700;color:#1a1a1a;white-space:nowrap;transform:scaleX(0.9015);transform-origin:left 0;left:578.00px;">Mail Delivery Subs...</div><div id="t58" style="position:absolute;top:590.14px;font-size:19.5px;line-height:19.5px;font-weight:700;color:#1a1a1a;white-space:nowrap;transform:scaleX(0.9148);transform-origin:left 0;left:885.30px;">Delivery Status Notification (Failure)</div><div id="t59" style="position:absolute;top:590.14px;font-size:19.5px;line-height:19.5px;font-weight:400;color:#8fa5bd;white-space:nowrap;left:1205.00px;">-</div><div style="position:absolute;left:1222.40px;top:590.14px;width:450.60px;height:25.4px;overflow:hidden"><div id="t60" style="font-size:19.5px;line-height:19.5px;font-weight:400;color:#3a3a3a;white-space:nowrap;transform:scaleX(0.9400);transform-origin:left 0;">** Message not delivered ** There was a problem delivering your message</div></div><div id="t61" style="position:absolute;top:591.31px;font-size:16px;line-height:16px;font-weight:700;color:#111111;white-space:nowrap;transform:scaleX(1.0488);transform-origin:left 0;left:1706.00px;">10/02</div><div id="t62" style="position:absolute;top:658.58px;font-size:16px;line-height:16px;font-weight:700;color:#ffffff;white-space:nowrap;left:350.60px;width:400px;text-align:center;">IB</div><div id="t63" style="position:absolute;top:657.02px;font-size:19.5px;line-height:19.5px;font-weight:700;color:#1a1a1a;white-space:nowrap;transform:scaleX(0.8792);transform-origin:left 0;left:578.00px;">IOL per IBL Banca</div><div id="t64" style="position:absolute;top:657.02px;font-size:19.5px;line-height:19.5px;font-weight:700;color:#1a1a1a;white-space:nowrap;transform:scaleX(0.8807);transform-origin:left 0;left:885.30px;">La consulenza è alta, la rata è bassa con RataBassotta! | Ann.</div><div id="t65" style="position:absolute;top:657.02px;font-size:19.5px;line-height:19.5px;font-weight:400;color:#8fa5bd;white-space:nowrap;left:1399.50px;">-</div><div style="position:absolute;left:1417.00px;top:657.02px;width:256.00px;height:25.4px;overflow:hidden"><div id="t66" style="font-size:19.5px;line-height:19.5px;font-weight:400;color:#3a3a3a;white-space:nowrap;transform:scaleX(0.9400);transform-origin:left 0;">Non vuoi pi&amp;ugrave; ricevere comunicazioni</div></div><div id="t67" style="position:absolute;top:658.18px;font-size:16px;line-height:16px;font-weight:700;color:#111111;white-space:nowrap;transform:scaleX(1.0488);transform-origin:left 0;left:1706.00px;">10/02</div><div id="t68" style="position:absolute;top:725.46px;font-size:16px;line-height:16px;font-weight:700;color:#ffffff;white-space:nowrap;left:350.60px;width:400px;text-align:center;">TE</div><div id="t69" style="position:absolute;top:723.89px;font-size:19.5px;line-height:19.5px;font-weight:700;color:#1a1a1a;white-space:nowrap;transform:scaleX(0.8971);transform-origin:left 0;left:578.00px;">Titan Email</div><div id="t70" style="position:absolute;top:723.89px;font-size:19.5px;line-height:19.5px;font-weight:700;color:#1a1a1a;white-space:nowrap;transform:scaleX(0.9110);transform-origin:left 0;left:885.30px;">Discover our latest email flexibility features</div><div id="t71" style="position:absolute;top:723.89px;font-size:19.5px;line-height:19.5px;font-weight:400;color:#8fa5bd;white-space:nowrap;left:1263.50px;">-</div><div style="position:absolute;left:1281.00px;top:723.89px;width:392.00px;height:25.4px;overflow:hidden"><div id="t72" style="font-size:19.5px;line-height:19.5px;font-weight:400;color:#3a3a3a;white-space:nowrap;transform:scaleX(0.9400);transform-origin:left 0;">Hi there, In keeping with our mission to help you work</div></div><div id="t73" style="position:absolute;top:725.06px;font-size:16px;line-height:16px;font-weight:700;color:#111111;white-space:nowrap;transform:scaleX(1.0488);transform-origin:left 0;left:1706.00px;">10/02</div><div id="t74" style="position:absolute;top:792.33px;font-size:16px;line-height:16px;font-weight:700;color:#ffffff;white-space:nowrap;left:350.60px;width:400px;text-align:center;">A</div><div id="t75" style="position:absolute;top:790.77px;font-size:19.5px;line-height:19.5px;font-weight:700;color:#1a1a1a;white-space:nowrap;transform:scaleX(0.8883);transform-origin:left 0;left:578.00px;">Alibaba.com</div><div id="t76" style="position:absolute;top:790.77px;font-size:19.5px;line-height:19.5px;font-weight:700;color:#1a1a1a;white-space:nowrap;transform:scaleX(0.8990);transform-origin:left 0;left:885.30px;">Source samples directly from the factory</div><div id="t77" style="position:absolute;top:790.77px;font-size:19.5px;line-height:19.5px;font-weight:400;color:#8fa5bd;white-space:nowrap;left:1237.30px;">-</div><div style="position:absolute;left:1261.70px;top:790.77px;width:411.30px;height:25.4px;overflow:hidden"><div id="t78" style="font-size:19.5px;line-height:19.5px;font-weight:400;color:#3a3a3a;white-space:nowrap;transform:scaleX(0.9400);transform-origin:left 0;">Customizable samples available for your personalization</div></div><div id="t79" style="position:absolute;top:791.93px;font-size:16px;line-height:16px;font-weight:700;color:#111111;white-space:nowrap;transform:scaleX(1.0488);transform-origin:left 0;left:1706.00px;">10/02</div></body></html>
